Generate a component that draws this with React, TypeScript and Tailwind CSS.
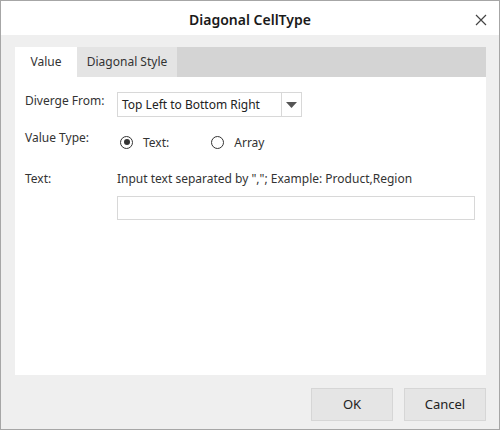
import React from "react";

export default function App() {
  const font = { fontFamily: '"Noto Sans", "Open Sans", sans-serif' };
  return (
    <div
      className="w-[500px] h-[430px] border border-[#a6a6a6] bg-[#efefef] flex flex-col text-[#333333] text-[12px]"
      style={font}
    >
      {/* Title bar */}
      <div className="h-[34px] bg-white flex items-center justify-center relative shrink-0">
        <span className="text-[14px] font-semibold text-[#1a1a1a] leading-none mt-[4px]">Diagonal CellType</span>
        <svg
          className="absolute right-[12px] top-[13px]"
          width="12"
          height="12"
          viewBox="0 0 12 12"
        >
          <path d="M1 1 L11 11 M11 1 L1 11" stroke="#444" strokeWidth="1.2" fill="none" />
        </svg>
      </div>

      {/* Body */}
      <div className="flex-1 flex flex-col pl-[14px] pr-[13px] pt-[12px]">
        <div className="flex flex-col h-[328px]">
          {/* Tab strip */}
          <div className="h-[30px] bg-[#d4d4d4] flex shrink-0">
            <div className="w-[62px] bg-white flex items-center justify-center text-[12px] text-[#333]">
              Value
            </div>
            <div className="w-[100px] bg-[#e4e4e4] flex items-center justify-center text-[12px] text-[#333]">
              Diagonal Style
            </div>
          </div>
          {/* Panel */}
          <div className="flex-1 bg-white pl-[10px] flex flex-col">
            {/* Row 1 */}
            <div className="flex mt-[15px]">
              <div className="w-[92px] leading-[18px]">Diverge From:</div>
              <div className="w-[185px] h-[25px] border border-[#d8d8d8] flex">
                <div className="flex-1 flex items-center pl-[4px] text-[12px] text-[#222] pt-[1px]">
                  Top Left to Bottom Right
                </div>
                <div className="w-[20px] border-l border-[#d8d8d8] flex items-center justify-center">
                  <svg width="11" height="6" viewBox="0 0 11 6">
                    <path d="M0 0 L11 0 L5.5 6 Z" fill="#555" />
                  </svg>
                </div>
              </div>
            </div>
            {/* Row 2 */}
            <div className="flex mt-[12px]">
              <div className="w-[92px] leading-[18px]">Value Type:</div>
              <div className="flex items-center mt-[4px] h-[18px]">
                <div className="w-[13px] h-[13px] rounded-full border border-[#333] flex items-center justify-center ml-[3px]">
                  <div className="w-[6px] h-[6px] rounded-full bg-[#333]" />
                </div>
                <span className="ml-[10px] leading-[18px] pt-[2px]">Text:</span>
                <div className="w-[13px] h-[13px] rounded-full border border-[#333] ml-[42px]" />
                <span className="ml-[10px] leading-[18px] pt-[2px]">Array</span>
              </div>
            </div>
            {/* Row 3 */}
            <div className="flex mt-[19px]">
              <div className="w-[92px] leading-[18px]">Text:</div>
              <div className="flex flex-col">
                <div className="leading-[18px]">Input text separated by ","; Example: Product,Region</div>
                <div className="mt-[8px] w-[358px] h-[24px] border border-[#d8d8d8]" />
              </div>
            </div>
          </div>
        </div>
        {/* Footer */}
        <div className="flex justify-end gap-[11px] mt-[13px]">
          <button className="w-[82px] h-[33px] bg-[#e5e5e5] border border-[#d6d6d6] text-[13px] text-[#222]">
            OK
          </button>
          <button className="w-[82px] h-[33px] bg-[#e5e5e5] border border-[#d6d6d6] text-[13px] text-[#222]">
            Cancel
          </button>
        </div>
      </div>
    </div>
  );
}
